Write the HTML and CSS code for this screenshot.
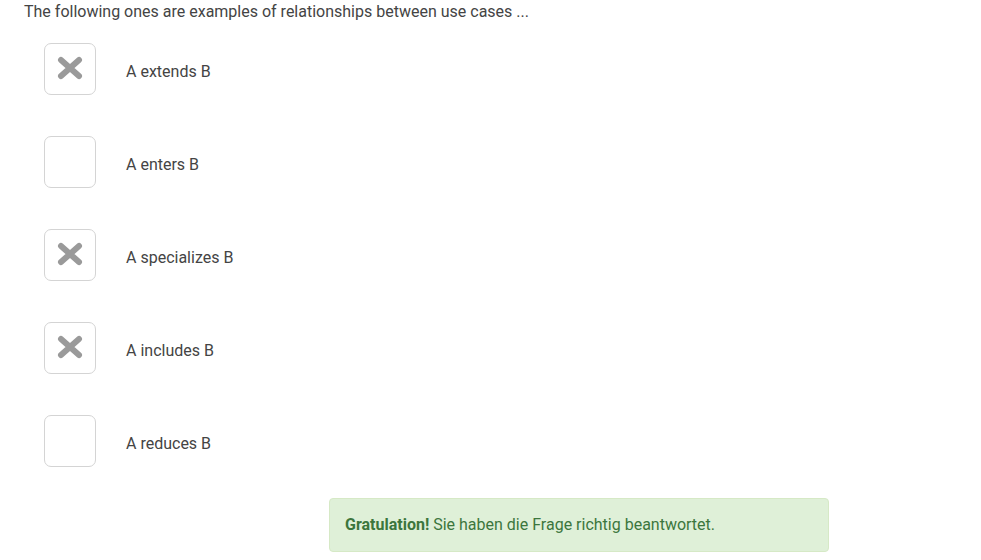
FILE: index.html
```html
<!DOCTYPE html>
<html>
<head>
<meta charset="utf-8">
<link rel="stylesheet" href="styles.css">
</head>
<body>
<div class="page">
  <p class="question">The following ones are examples of relationships between use cases ...</p>
  <ul class="options">
    <li class="option">
      <span class="box"><svg class="cross" viewBox="0 0 26 24" width="26" height="24"><path d="M4 4 L22 20 M22 4 L4 20" /></svg></span>
      <span class="label">A extends B</span>
    </li>
    <li class="option">
      <span class="box"></span>
      <span class="label">A enters B</span>
    </li>
    <li class="option">
      <span class="box"><svg class="cross" viewBox="0 0 26 24" width="26" height="24"><path d="M4 4 L22 20 M22 4 L4 20" /></svg></span>
      <span class="label">A specializes B</span>
    </li>
    <li class="option">
      <span class="box"><svg class="cross" viewBox="0 0 26 24" width="26" height="24"><path d="M4 4 L22 20 M22 4 L4 20" /></svg></span>
      <span class="label">A includes B</span>
    </li>
    <li class="option">
      <span class="box"></span>
      <span class="label">A reduces B</span>
    </li>
  </ul>
  <div class="alert"><strong>Gratulation!</strong> Sie haben die Frage richtig beantwortet.</div>
</div>
</body>
</html>
```
FILE: styles.css
```css
html, body {
  margin: 0;
  padding: 0;
  background: #fff;
}
body {
  font-family: Roboto, "Liberation Sans", sans-serif;
  font-size: 16px;
  color: #444;
}
.page {
  padding: 0 24px;
}
.question {
  margin: 0;
  padding-top: 2px;
  line-height: 20px;
}
.options {
  list-style: none;
  margin: 21px 0 0 20px;
  padding: 0;
  display: flex;
  flex-direction: column;
  gap: 41px;
}
.option {
  display: flex;
  align-items: center;
  gap: 30px;
}
.box {
  width: 50px;
  height: 50px;
  border: 1px solid #d4d4d4;
  border-radius: 7px;
  display: flex;
  align-items: center;
  justify-content: center;
  flex: none;
}
.cross {
  margin: 0 1px 2px 0;
}
.cross path {
  stroke: #9a9a9a;
  stroke-width: 6;
  stroke-linecap: round;
  fill: none;
}
.label {
  line-height: 20px;
  margin-top: 6px;
}
.alert {
  margin: 31px 0 0 305px;
  width: 500px;
  box-sizing: border-box;
  height: 54px;
  padding: 15px 15px;
  background: #dff0d8;
  border: 1px solid #d6e9c6;
  border-radius: 4px;
  color: #3c763d;
  line-height: 22px;
}
.alert strong {
  font-weight: 700;
}
```
